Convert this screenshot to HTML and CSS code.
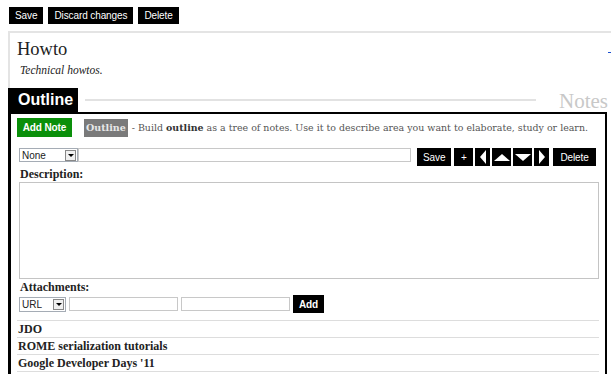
FILE: index.html
```html
<!DOCTYPE html>
<html lang="en">
<head>
    <meta charset="UTF-8">
    <title>Howto</title>
    <link rel="stylesheet" href="styles.css">
</head>
<body>
    <div class="toolbar">
        <button class="btn">Save</button>
        <button class="btn">Discard changes</button>
        <button class="btn">Delete</button>
    </div>

    <div class="header">
        <div>
            <h1>Howto</h1>
            <p class="subtitle">Technical howtos.</p>
        </div>
        <span class="dash"></span>
    </div>

    <div class="tabs">
        <span class="tab">Outline</span>
        <span class="rule"></span>
        <span class="tab-off">Notes</span>
    </div>

    <div class="panel">
        <div class="intro">
            <button class="btn add">Add Note</button>
            <span class="badge">Outline</span>
            <span class="hint">- Build <b>outline</b> as a tree of notes. Use it to describe area you want to elaborate, study or learn.</span>
        </div>

        <div class="edit">
            <div class="row">
                <div class="select"><span>None</span><span class="drop"></span></div>
                <input type="text" class="title-input">
                <div class="actions">
                    <button class="btn">Save</button>
                    <button class="btn plus">+</button>
                    <button class="btn arrow"><span class="tri left"></span></button>
                    <button class="btn arrow wide"><span class="tri up"></span></button>
                    <button class="btn arrow wide"><span class="tri down"></span></button>
                    <button class="btn arrow"><span class="tri right"></span></button>
                    <button class="btn delete">Delete</button>
                </div>
            </div>

            <label class="field-label">Description:</label>
            <textarea class="description"></textarea>

            <label class="field-label">Attachments:</label>
            <div class="row attach">
                <div class="select small"><span>URL</span><span class="drop"></span></div>
                <input type="text" class="url-input">
                <input type="text" class="url-input">
                <button class="btn bold">Add</button>
            </div>
        </div>

        <ul class="notes">
            <li>JDO</li>
            <li>ROME serialization tutorials</li>
            <li>Google Developer Days '11</li>
        </ul>
    </div>
</body>
</html>
```

FILE: styles.css
```css
body {
    margin: 7px 0 0 8px;
    font-family: "Liberation Serif", serif;
    font-size: 11px;
    color: #222;
    overflow: hidden;
}

.btn {
    background: #000;
    color: #fff;
    border: none;
    border-radius: 0;
    font-family: "Liberation Sans", Arial, sans-serif;
    font-size: 10px;
    letter-spacing: -0.1px;
    height: 18px;
    padding: 0 6px;
    margin: 0;
    cursor: pointer;
}

.toolbar {
    display: flex;
    gap: 5px;
    margin-left: 1px;
}

.toolbar .btn {
    height: 17px;
}

.header {
    display: flex;
    justify-content: space-between;
    margin-top: 7px;
    border-top: 2px solid #e4e4e4;
    border-left: 2px solid #e4e4e4;
    height: 50px;
    padding: 5px 0 0 7px;
    width: 594px;
}

.header h1 {
    margin: 0;
    font-weight: normal;
    font-size: 18.5px;
    line-height: 22px;
}

.subtitle {
    margin: 4px 0 0 3px;
    font-style: italic;
    font-size: 11.5px;
}

.dash {
    width: 3px;
    height: 1px;
    background: #1a4fd0;
    margin-top: 14px;
}

.tabs {
    display: flex;
    align-items: center;
    height: 24px;
    width: 603px;
    overflow: hidden;
}

.tab {
    background: #000;
    color: #fff;
    font-family: "Liberation Sans", Arial, sans-serif;
    font-weight: bold;
    font-size: 16px;
    line-height: 24px;
    width: 60px;
    padding-left: 10px;
    align-self: stretch;
}

.rule {
    flex: 1;
    height: 2px;
    background: #e2e2e2;
    margin: 0 23px 0 7px;
}

.tab-off {
    color: #c8c8c8;
    font-size: 21px;
    line-height: 24px;
    padding: 2px 3px 0 0;
}

.panel {
    width: 585px;
    border: 2px solid #000;
    border-left-width: 3px;
    padding: 4px 3px 20px 6px;
}

.intro {
    display: flex;
    align-items: center;
    white-space: nowrap;
}

.btn.add {
    background: #0a8f0a;
    font-weight: bold;
    height: 19px;
    width: 55px;
    padding: 0;
}

.badge {
    background: #7a7a7a;
    color: #e8e8e8;
    font-family: "DejaVu Serif", serif;
    font-weight: bold;
    font-size: 9.5px;
    line-height: 18px;
    padding: 0 2px;
    margin: 0 4px 0 12px;
}

.hint {
    color: #555;
    font-family: "DejaVu Serif", serif;
    font-size: 9.45px;
}

.hint b {
    color: #333;
}

.edit {
    padding-left: 2px;
}

.row {
    display: flex;
    align-items: flex-start;
    margin-top: 11px;
}

.select {
    display: flex;
    align-items: center;
    justify-content: space-between;
    width: 55px;
    height: 12px;
    border: 1px solid #a5acb5;
    font-family: "Liberation Sans", Arial, sans-serif;
    font-size: 10px;
    padding-left: 2px;
    background: #fff;
}

.select.small {
    width: 43px;
    height: 13px;
}

.drop {
    width: 9px;
    height: 9px;
    margin-right: 1px;
    border: 1px solid #888;
    background: #f0f0f0;
    position: relative;
}

.drop::after {
    content: "";
    position: absolute;
    left: 2px;
    top: 3px;
    border-left: 3px solid transparent;
    border-right: 3px solid transparent;
    border-top: 3px solid #000;
}

input[type="text"] {
    border: 1px solid #c8c8c8;
    height: 12px;
    padding: 0;
    margin: 0;
    box-sizing: content-box;
}

.title-input {
    width: 331px;
    margin-left: 1px;
}

.actions {
    display: flex;
    gap: 3px;
    margin-left: 6px;
}

.btn.plus {
    width: 19px;
    padding: 0;
}

.btn.delete {
    padding: 0 7px;
    margin-left: 1px;
}

.btn.arrow {
    width: 15px;
    padding: 0;
    display: flex;
    align-items: center;
    justify-content: center;
}

.btn.arrow.wide {
    width: 19px;
}

.actions .btn.arrow {
    margin-left: -1px;
}

.tri {
    width: 0;
    height: 0;
}

.tri.left {
    border-top: 7px solid transparent;
    border-bottom: 7px solid transparent;
    border-right: 6px solid #fff;
}

.tri.right {
    border-top: 7px solid transparent;
    border-bottom: 7px solid transparent;
    border-left: 6px solid #fff;
}

.tri.up {
    border-left: 8px solid transparent;
    border-right: 8px solid transparent;
    border-bottom: 7px solid #fff;
}

.tri.down {
    border-left: 8px solid transparent;
    border-right: 8px solid transparent;
    border-top: 7px solid #fff;
}

.field-label {
    display: block;
    font-weight: bold;
    font-size: 12px;
    line-height: 12px;
    margin: 2px 0 2px 1px;
}

.description {
    display: block;
    width: 578px;
    height: 95px;
    border: 1px solid #c4c4c4;
    padding: 0;
    margin: 0;
    resize: none;
}

.attach {
    margin-top: 1px;
    align-items: center;
    gap: 3px;
}

.url-input {
    width: 107px;
}

.btn.bold {
    font-weight: bold;
    width: 31px;
    padding: 0;
}

.notes {
    list-style: none;
    margin: 7px 0 0;
    padding: 0;
    width: 582px;
}

.notes li {
    border-top: 1px solid #ddd;
    border-bottom: 1px solid transparent;
    margin-bottom: -1px;
    font-weight: bold;
    font-size: 12px;
    line-height: 16px;
    padding-left: 1px;
}

.notes li:last-child {
    border-bottom-color: #ddd;
}
```
